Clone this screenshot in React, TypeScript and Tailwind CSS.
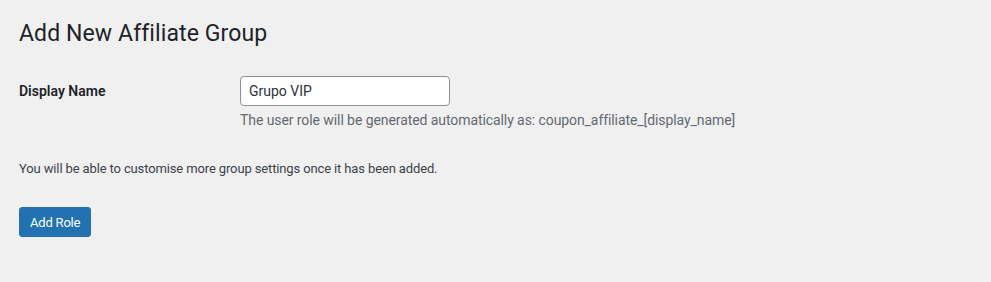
export default function App() {
  return (
    <div
      className="min-h-[282px] w-full bg-[#f0f0f1] pl-[19px] pr-5 pt-[19px] text-[#3c434a]"
      style={{ fontFamily: "Roboto, 'Liberation Sans', sans-serif" }}
    >
      <h1 className="text-[23px] font-normal leading-[1.3] tracking-[0.1px] text-[#1d2327]">
        Add New Affiliate Group
      </h1>

      <div className="mt-[27px] flex">
        <label className="w-[221px] pt-[6px] text-[14px] font-semibold leading-[1.3] text-[#1d2327]">
          Display Name
        </label>
        <div className="flex flex-col">
          <input
            type="text"
            defaultValue="Grupo VIP"
            className="h-[30px] w-[210px] rounded-[4px] border border-[#8c8f94] bg-white px-2 text-[14px] text-[#2c3338] outline-none"
          />
          <p className="mt-[4px] text-[14px] leading-[1.5] tracking-[-0.08px] text-[#646970]">
            The user role will be generated automatically as: coupon_affiliate_[display_name]
          </p>
        </div>
      </div>

      <p className="mt-[28px] text-[13px] leading-[1.5] tracking-[-0.13px]">
        You will be able to customise more group settings once it has been added.
      </p>

      <button
        type="button"
        className="mt-[29px] h-[30px] rounded-[3px] border border-[#2271b1] bg-[#2271b1] px-[10px] text-[13px] tracking-[-0.2px] text-white"
      >
        Add Role
      </button>
    </div>
  );
}
